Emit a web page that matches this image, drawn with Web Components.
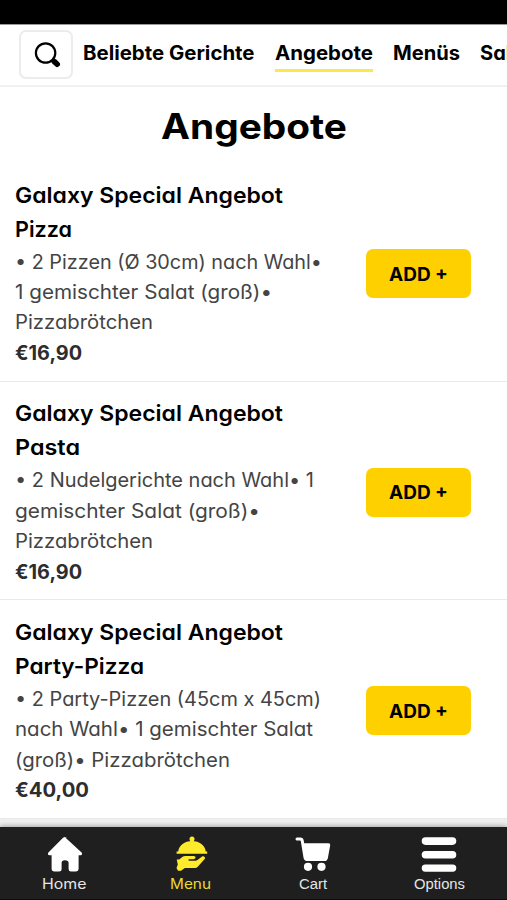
<!DOCTYPE html>
<html lang="de">
<head>
<meta charset="utf-8">
<title>Angebote</title>
<style>
html,body{margin:0;height:900px;overflow:hidden;background:#fff}
body{font-family:Inter,"Noto Sans",sans-serif;color:#000;font-feature-settings:"cv11"}
</style>
</head>
<body>
<menu-app></menu-app>
<script>
const make = (el, html) => { el.attachShadow({mode:'open'}).innerHTML = html; };

// One line of text whose glyphs are stretched to a given width
customElements.define('fit-line', class extends HTMLElement {
  connectedCallback() {
    if (this.shadowRoot) return;
    make(this, `<style>:host{display:block;white-space:nowrap}span{display:inline-block;transform-origin:0 50%}</style><span></span>`);
    const s = this.shadowRoot.querySelector('span');
    s.textContent = this.getAttribute('text');
    const w = Number(this.getAttribute('w'));
    const k = w / s.getBoundingClientRect().width;
    this.style.width = w + 'px';
    s.style.transform = `scaleX(${k.toFixed(4)})`;
  }
});

customElements.define('search-button', class extends HTMLElement {
  connectedCallback() {
    make(this, `<style>:host{display:flex;flex:none;box-sizing:border-box;width:54px;height:49px;border:2px solid #ececec;border-radius:7px;background:#fff}
svg{display:block;margin:9px 0 0 13px}</style>
<svg width="28" height="28" viewBox="0 0 28 28"><circle cx="11.6" cy="12" r="9.7" fill="none" stroke="#000" stroke-width="2.2"/><path d="M18.3 18.6l2 2" stroke="#000" stroke-width="2.6"/><path d="M20.4 20.6l2.8 2.6" stroke="#000" stroke-width="5.6" stroke-linecap="round"/></svg>`);
  }
});

customElements.define('category-tab', class extends HTMLElement {
  connectedCallback() {
    make(this, `<style>:host{display:block;flex:none;font-size:19.5px;font-weight:700;line-height:31px;border-bottom:3px solid transparent}
:host([active]){border-color:#fbe94b}</style><fit-line text="${this.getAttribute('label')}" w="${this.getAttribute('w')}"></fit-line>`);
  }
});

customElements.define('category-bar', class extends HTMLElement {
  connectedCallback() {
    make(this, `<style>:host{display:flex;box-sizing:border-box;height:62px;padding:5px 0 0 19px;border-bottom:2px solid #f1f1f1;overflow:hidden}
nav{display:flex;gap:20px;margin-left:10px;padding-top:8px;height:34px}</style>
<search-button></search-button>
<nav><category-tab label="Beliebte Gerichte" w="171.5"></category-tab><category-tab label="Angebote" w="98" active></category-tab><category-tab label="Menüs" w="67"></category-tab><category-tab label="Salate" w="63"></category-tab></nav>`);
  }
});

customElements.define('add-button', class extends HTMLElement {
  connectedCallback() {
    make(this, `<style>:host{display:flex;flex:none;width:105px;height:49px;border-radius:7px;background:#ffd000;align-items:center;justify-content:center;font-size:18.5px;font-weight:700}</style><fit-line text="ADD +" w="59"></fit-line>`);
  }
});

customElements.define('offer-item', class extends HTMLElement {
  set data(d) {
    const lines = a => a.map(([t, w]) => `<fit-line text="${t}" w="${w}"></fit-line>`).join('');
    make(this, `<style>:host{display:flex;box-sizing:border-box;height:218.7px;padding:14.5px 36px 0 15px;border-bottom:1.5px solid #e9e9e9;justify-content:space-between}
.title{font-size:22px;font-weight:600;line-height:34.2px}
.desc{padding-top:.6px;font-size:19.5px;font-weight:400;line-height:30.45px;color:#444}
.price{font-size:19.5px;font-weight:700;line-height:30.45px;color:#2d2d2d}
add-button{margin-top:71.5px}</style>
<div><div class="title">${lines(d.title)}</div><div class="desc">${lines(d.desc)}</div><div class="price">${lines([d.price])}</div></div><add-button></add-button>`);
  }
});

const icons = {
  Home: `<path d="M18 1.2 34.6 16.4Q36 18.4 33.6 19.3H31.6V32.5Q31.6 35.5 28.6 35.5H24Q21.6 35.5 21.6 33V27Q21.6 24.3 18 24.3T14.6 27V33Q14.6 35.5 12 35.5H7.5Q4.6 35.5 4.6 32.5V19.3H2.4Q0 18.4 1.4 16.4L15.8 2Q18 .2 20.2 2Z"/>`,
  Menu: `<circle cx="19" cy="3.1" r="2.5"/><path d="M5.2 15.6C6 9 11.5 4.9 19 4.9S32 9 32.8 15.6H34.2V17.8H3.6V15.6Z"/><path d="M3.7 23.4H6.2L9.6 20.8Q10.7 20 12.4 20H20.8Q22.7 20.2 22.6 21.6T20.6 23.2H15.6V24.7H22.4Q23.6 24.7 24.5 24L29.4 20.3Q30.6 19.8 31.7 20.9T31.2 23.4L25 30.5Q23.8 32 21.6 32H11.8L8 34.8H5L3.5 32 4.8 28.6Z"/>`,
  Cart: `<path d="M2 3.1H5.2Q7 3.1 7.3 5L10 21.5Q10.5 23.4 12 23.4H30" fill="none" stroke="currentColor" stroke-width="3" stroke-linecap="round"/><path d="M8 7.2H33.5Q35.6 7.2 35.2 9.3L32.8 22.5Q32.3 24.9 30 24.9H12.5Q10 24.9 9.6 22.5Z"/><circle cx="13" cy="30.8" r="4.1"/><circle cx="26.5" cy="30.8" r="4.1"/>`,
  Options: `<rect x=".7" y="1.3" width="34.6" height="7.6" rx="3.8"/><rect x=".7" y="15" width="34.6" height="7.6" rx="3.8"/><rect x=".7" y="28.5" width="34.6" height="7.2" rx="3.6"/>`
};
customElements.define('nav-item', class extends HTMLElement {
  connectedCallback() {
    const n = this.getAttribute('name');
    make(this, `<style>:host{display:flex;flex-direction:column;align-items:center;color:#fff;padding-top:9px}
:host([active]){color:#ffeb2c}
svg{display:block;fill:currentColor}
fit-line{font-size:14px;line-height:18px;margin-top:2px;color:#e6e6e6}
:host([active]) fit-line{color:#eadb35}
:host([plain]) fit-line{font-family:"Liberation Sans",Arial,sans-serif}</style>
<svg width="36" height="37" viewBox="0 0 36 37">${icons[n]}</svg><fit-line text="${n}" w="${this.getAttribute('w')}"></fit-line>`);
  }
});

customElements.define('bottom-nav', class extends HTMLElement {
  connectedCallback() {
    make(this, `<style>:host{display:grid;grid-template-columns:129px 123px 121px 132px;box-sizing:border-box;height:73px;background:#1f1f1f;border-bottom:1px solid #160a10;box-shadow:0 -1px 5px #0005}</style>
<nav-item name="Home" w="44.5"></nav-item><nav-item name="Menu" w="41" active></nav-item><nav-item name="Cart" w="28" plain></nav-item><nav-item name="Options" w="51" plain></nav-item>`);
  }
});

customElements.define('menu-app', class extends HTMLElement {
  connectedCallback() {
    make(this, `<style>:host{display:flex;flex-direction:column;height:900px;width:507px;overflow:hidden;background:#fff}
.status{height:25px;flex:none;background:#000;border-bottom:1px solid #999;box-sizing:border-box}
category-bar,offer-item,bottom-nav{flex:none}
h1{flex:none;margin:0;height:76px;box-sizing:border-box;padding-top:13px;display:flex;justify-content:center;font-size:35px;font-weight:700;line-height:52px}
.rest{flex:1;background:#efefef}</style>
<div class="status"></div><category-bar></category-bar>
<h1><fit-line text="Angebote" w="186"></fit-line></h1>
<main></main><div class="rest"></div><bottom-nav></bottom-nav>`);
    const g = ['Galaxy Special Angebot', 268];
    const main = this.shadowRoot.querySelector('main');
    [
      {title:[g,['Pizza',57]], desc:[['• 2 Pizzen (Ø 30cm) nach Wahl•',307],['1 gemischter Salat (groß)•',257],['Pizzabrötchen',138]], price:['€16,90',67]},
      {title:[g,['Pasta',65]], desc:[['• 2 Nudelgerichte nach Wahl• 1',299],['gemischter Salat (groß)•',245],['Pizzabrötchen',138]], price:['€16,90',67]},
      {title:[g,['Party-Pizza',129]], desc:[['• 2 Party-Pizzen (45cm x 45cm)',306],['nach Wahl• 1 gemischter Salat',298],['(groß)• Pizzabrötchen',215]], price:['€40,00',74]}
    ].forEach(d => { const o = document.createElement('offer-item'); o.data = d; main.append(o); });
  }
});
</script>
</body>
</html>
